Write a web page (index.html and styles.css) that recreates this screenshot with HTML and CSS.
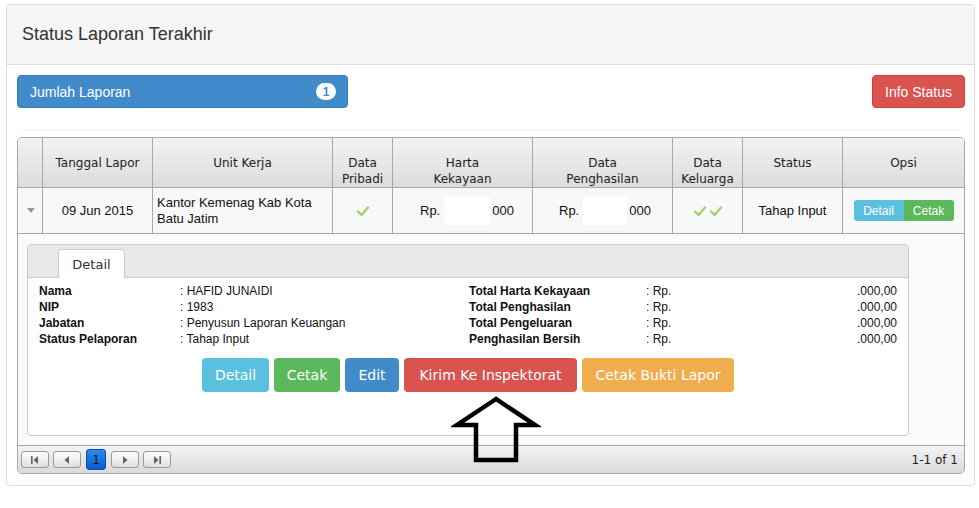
FILE: index.html
```html
<!DOCTYPE html>
<html>
<head>
<meta charset="utf-8">
<link rel="stylesheet" href="styles.css">
</head>
<body>
<div class="page">
  <div class="panel">
    <div class="panel-heading">Status Laporan Terakhir</div>
    <div class="panel-body">
      <div class="toolbar">
        <div class="btn-jumlah">Jumlah Laporan <span class="badge">1</span></div>
        <div class="btn-info-status">Info Status</div>
      </div>
      <div class="hr"></div>
      <div class="grid">
        <div class="grid-row grid-head">
          <div class="hc"></div>
          <div class="hc">Tanggal Lapor</div>
          <div class="hc">Unit Kerja</div>
          <div class="hc">Data<br>Pribadi</div>
          <div class="hc">Harta<br>Kekayaan</div>
          <div class="hc">Data<br>Penghasilan</div>
          <div class="hc">Data<br>Keluarga</div>
          <div class="hc">Status</div>
          <div class="hc">Opsi</div>
        </div>
        <div class="grid-row grid-data">
          <div class="dc center"><span class="tri-down"></span></div>
          <div class="dc center">09 Jun 2015</div>
          <div class="dc left">Kantor Kemenag Kab Kota<br>Batu Jatim</div>
          <div class="dc center"><svg class="chk" viewBox="0 0 14 12" width="14" height="12"><path d="M2 6.5 L5.5 10 L12 2.5" fill="none" stroke="#a7d165" stroke-width="2.4" stroke-linecap="round" stroke-linejoin="round"/></svg></div>
          <div class="dc money"><span>Rp.</span><span class="mask mask1"></span><span>000</span></div>
          <div class="dc money m2"><span>Rp.</span><span class="mask mask2"></span><span>000</span></div>
          <div class="dc center"><svg class="chk" viewBox="0 0 14 12" width="14" height="12"><path d="M2 6.5 L5.5 10 L12 2.5" fill="none" stroke="#a7d165" stroke-width="2.4" stroke-linecap="round" stroke-linejoin="round"/></svg><svg class="chk" viewBox="0 0 14 12" width="14" height="12"><path d="M2 6.5 L5.5 10 L12 2.5" fill="none" stroke="#a7d165" stroke-width="2.4" stroke-linecap="round" stroke-linejoin="round"/></svg></div>
          <div class="dc center">Tahap Input</div>
          <div class="dc center"><div class="btn-group"><span class="sb sb-info">Detail</span><span class="sb sb-success">Cetak</span></div></div>
        </div>
        <div class="subgrid">
          <div class="tabbox">
            <div class="tabbar"><div class="tab">Detail</div></div>
            <div class="detail">
              <div class="lbl">Nama</div><div class="val">: HAFID JUNAIDI</div><div class="lbl">Total Harta Kekayaan</div><div class="val2"><span>: Rp.</span><span>.000,00</span></div>
              <div class="lbl">NIP</div><div class="val">: 1983</div><div class="lbl">Total Penghasilan</div><div class="val2"><span>: Rp.</span><span>.000,00</span></div>
              <div class="lbl">Jabatan</div><div class="val">: Penyusun Laporan Keuangan</div><div class="lbl">Total Pengeluaran</div><div class="val2"><span>: Rp.</span><span>.000,00</span></div>
              <div class="lbl">Status Pelaporan</div><div class="val">: Tahap Input</div><div class="lbl">Penghasilan Bersih</div><div class="val2"><span>: Rp.</span><span>.000,00</span></div>
            </div>
            <div class="actions">
              <span class="btn b-info">Detail</span>
              <span class="btn b-success">Cetak</span>
              <span class="btn b-primary">Edit</span>
              <span class="btn b-danger">Kirim Ke Inspektorat</span>
              <span class="btn b-warning">Cetak Bukti Lapor</span>
            </div>
          </div>
        </div>
        <div class="pager">
          <div class="pg-buttons">
            <span class="pb"><svg viewBox="0 0 12 10" width="12" height="10"><rect x="2" y="1" width="1.6" height="8" fill="#666"/><path d="M9 1 L4.5 5 L9 9 Z" fill="#666"/></svg></span>
            <span class="pb"><svg viewBox="0 0 12 10" width="12" height="10"><path d="M8 1 L3.5 5 L8 9 Z" fill="#666"/></svg></span>
            <span class="pb pb-page">1</span>
            <span class="pb"><svg viewBox="0 0 12 10" width="12" height="10"><path d="M4 1 L8.5 5 L4 9 Z" fill="#666"/></svg></span>
            <span class="pb"><svg viewBox="0 0 12 10" width="12" height="10"><path d="M3 1 L7.5 5 L3 9 Z" fill="#666"/><rect x="8.4" y="1" width="1.6" height="8" fill="#666"/></svg></span>
          </div>
          <div class="pg-info">1-1 of 1</div>
        </div>
      </div>
    </div>
  </div>
  <svg class="arrow" viewBox="0 0 90 72" width="90" height="72"><path d="M45 5 L6 31 L25 31 L25 66 L65 66 L65 31 L84 31 Z" fill="none" stroke="#000" stroke-width="4.5" stroke-linejoin="miter"/></svg>
</div>
</body>
</html>
```

FILE: styles.css
```css
* { box-sizing: border-box; }
body { margin: 0; background: #fff; font-family: "Liberation Sans", Arial, sans-serif; color: #333; }
.page { position: relative; padding: 4px 4px 0 6px; width: 979px; height: 508px; }
.panel { width: 969px; border: 1px solid #dddddd; border-radius: 4px; }
.panel-heading { height: 60px; background: #f5f5f5; border-bottom: 1px solid #dddddd; padding: 0 15px; display: flex; align-items: center; font-size: 18px; color: #333; border-radius: 4px 4px 0 0; }
.panel-body { padding: 10px 9px 11px 10px; }
.toolbar { display: flex; justify-content: space-between; }
.btn-jumlah { width: 331px; height: 33px; background: #428bca; border: 1px solid #357ebd; border-radius: 4px; color: #fff; font-size: 14px; display: flex; align-items: center; justify-content: space-between; padding: 0 11px 0 12px; }
.badge { background: #fff; color: #428bca; font-weight: bold; font-size: 12px; min-width: 20px; height: 17px; border-radius: 9px; display: inline-flex; align-items: center; justify-content: center; }
.btn-info-status { width: 93px; height: 33px; background: #d9534f; border: 1px solid #d43f3a; border-radius: 4px; color: #fff; font-size: 14px; display: flex; align-items: center; justify-content: center; }
.hr { height: 1px; background: #eeeeee; margin: 22px 4px 6px 4px; }
.grid { width: 948px; border: 1px solid #a8a8a8; border-radius: 5px; overflow: hidden; background: #fafafa; }
.grid-row { display: grid; grid-template-columns: 25px 110px 180px 60px 140px 140px 70px 100px 121px; }
.grid-head { height: 50px; background: linear-gradient(#f2f2f2, #dcdcdc); border-bottom: 1px solid #a8a8a8; }
.hc { border-right: 1px solid #a8a8a8; text-align: center; font-family: "DejaVu Sans", Verdana, sans-serif; font-size: 12px; line-height: 16px; color: #222; padding-top: 17px; }
.hc:last-child { border-right: none; }
.grid-data { height: 46px; background: #f8f8f8; border-bottom: 1px solid #a8a8a8; }
.dc { border-right: 1px solid #a8a8a8; font-size: 13px; color: #111; display: flex; align-items: center; line-height: 16px; }
.dc:last-child { border-right: none; }
.center { justify-content: center; }
.left { padding-left: 4px; }
.money { padding-left: 27px; }
.money.m2 { padding-left: 26px; }
.mask { display: inline-block; background: #fff; height: 28px; }
.mask1 { width: 46px; margin: 0 2px 0 4px; }
.mask2 { width: 44px; margin: 0 2px 0 4px; }
.tri-down { width: 0; height: 0; border-left: 4.5px solid transparent; border-right: 4.5px solid transparent; border-top: 5px solid #999; margin-left: 1px; }
.chk { margin: 0 1px; }
.btn-group { display: flex; }
.sb { height: 21px; width: 50px; display: flex; align-items: center; justify-content: center; color: #fff; font-size: 12px; }
.sb-info { background: #5bc0de; border-radius: 3px 0 0 3px; }
.sb-success { background: #5cb85c; border-radius: 0 3px 3px 0; }
.subgrid { height: 211px; padding: 10px 0 0 9px; background: #fafafa; }
.tabbox { width: 882px; height: 192px; border: 1px solid #cccccc; border-radius: 4px; background: #fff; overflow: hidden; }
.tabbar { height: 33px; background: #e8e8e8; border-bottom: 1px solid #cccccc; padding: 4px 0 0 30px; display: flex; }
.tab { width: 67px; height: 29px; background: #fff; border: 1px solid #cccccc; border-bottom: none; border-radius: 4px 4px 0 0; font-family: "DejaVu Sans", Verdana, sans-serif; font-size: 13px; color: #333; display: flex; align-items: center; justify-content: center; }
.detail { display: grid; grid-template-columns: 141px 289px 177px 251px; padding: 5px 0 0 11px; font-size: 12px; line-height: 16px; color: #111; }
.lbl { font-weight: bold; }
.val2 { display: flex; justify-content: space-between; }
.actions { display: flex; justify-content: center; gap: 5px; margin-top: 11px; }
.btn { height: 34px; display: flex; align-items: center; justify-content: center; color: #fff; font-family: "DejaVu Sans", Verdana, sans-serif; font-size: 14px; border-radius: 4px; }
.b-info { width: 67px; background: #5bc0de; }
.b-success { width: 66px; background: #5cb85c; }
.b-primary { width: 54px; background: #428bca; }
.b-danger { width: 173px; background: #d9534f; }
.b-warning { width: 152px; background: #f0ad4e; }
.pager { height: 28px; border-top: 1px solid #a8a8a8; background: linear-gradient(#f3f3f3, #dadada); display: flex; align-items: center; justify-content: space-between; padding: 0 6px 0 3px; }
.pg-buttons { display: flex; gap: 4px; }
.pb { width: 28px; height: 17px; border: 1px solid #9a9a9a; border-radius: 3px; background: linear-gradient(#ffffff, #dedede); display: flex; align-items: center; justify-content: center; }
.pb-page { width: 20px; height: 21px; margin: -2px 1px; background: linear-gradient(#2a8bf0, #0a5cc8); border-color: #0a4fa8; color: #1a1a1a; font-family: "DejaVu Sans", Verdana, sans-serif; font-size: 12px; }
.pg-info { font-family: "DejaVu Sans", Verdana, sans-serif; font-size: 12px; color: #222; }
.arrow { position: absolute; left: 451px; top: 394px; }
```
